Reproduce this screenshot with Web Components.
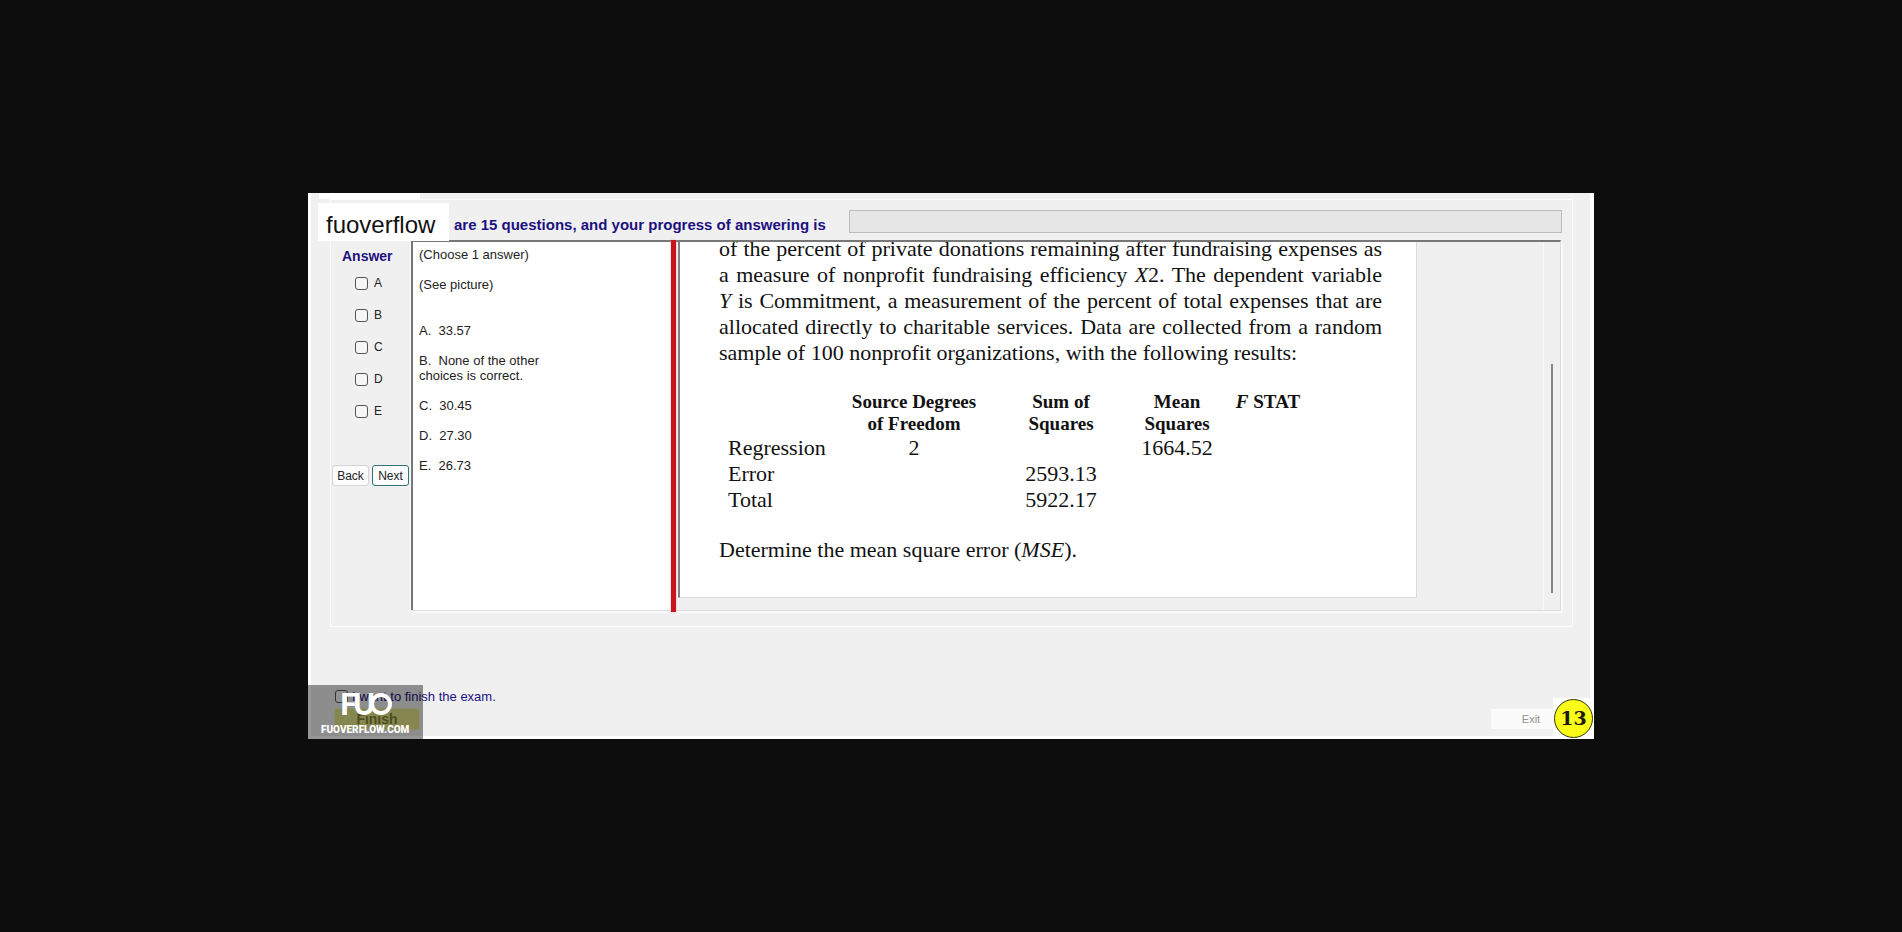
<!DOCTYPE html>
<html lang="en">
<head>
<meta charset="utf-8">
<title>Exam</title>
<style>
  body { margin: 0; background: #0d0d0d; font-family: "Liberation Sans", Arial, sans-serif; }
</style>
</head>
<body>
<exam-app></exam-app>

<template id="exam-app">
  <style>
    :host { display: flex; align-items: center; justify-content: center; min-height: 100vh; }
    main { position: relative; box-sizing: border-box; width: 100%; max-width: 1286px;
      background: linear-gradient(#fff, #fff) 8px 0 / 101px 6px no-repeat #f0f0f0;
      border: solid #fff; border-width: 0 4px 3px 3px; padding-top: 6px; }
    .frame { margin: 0 17px 0 19px; border: 1px solid #fcfcfc; padding: 0 11px 15px 0; }
    .body { display: flex; }
    .panes { flex: 1; min-width: 0; display: flex; border-top: 2px solid #777; border-right: 1px solid #dcdcdc;
      border-bottom: 1px solid #dcdcdc; box-shadow: 2px 2px 0 #fafafa; }
    .bar { width: 5px; background: #c4161c; margin: -2px 0; box-shadow: 0 0 2px #e9a0a0; }
    .view { flex: 1; min-width: 0; display: flex; justify-content: space-between; }
    .rail { width: 16px; border-left: 1px solid #f8f8f8; display: flex; justify-content: center; }
    .thumb { width: 2px; margin: 122px 0 17px; background: #868686; }
    .tag { position: absolute; left: 7px; top: 10px; width: 131px; height: 38px; box-sizing: border-box;
      background: #fff; padding: 5px 0 0 8px; font-size: 24px; line-height: 33px; color: #111; }
  </style>
  <main>
    <div class="frame">
      <exam-progress>are 15 questions, and your progress of answering is</exam-progress>
      <div class="body">
        <answer-panel></answer-panel>
        <div class="panes">
          <question-text></question-text>
          <div class="bar"></div>
          <div class="view">
            <question-picture></question-picture>
            <div class="rail"><div class="thumb"></div></div>
          </div>
        </div>
      </div>
    </div>
    <exam-footer></exam-footer>
    <div class="tag">fuoverflow</div>
  </main>
</template>

<template id="exam-progress">
  <style>
    :host { display: flex; align-items: center; height: 40px; padding-left: 123px; gap: 23px; }
    label { font-weight: bold; font-size: 15px; line-height: 18px; color: #1c1080; padding-top: 9px; white-space: nowrap; }
    .track { flex: 1; height: 21px; border: 1px solid #bcbcbc; background: #e6e6e6; margin-right: -1px; margin-top: 2px; }
  </style>
  <label id="l"><slot></slot></label>
  <div class="track" role="progressbar" aria-labelledby="l"></div>
</template>

<template id="answer-panel">
  <style>
    :host { display: block; width: 80px; flex: none; box-sizing: border-box; border-right: 1px solid #fafafa; }
    h2 { margin: 8px 0 11px 11px; font-size: 14px; line-height: 16px; color: #1c1080; }
    label { display: flex; align-items: center; gap: 6px; height: 16px; margin: 0 0 16px 24px; font-size: 12px; color: #222; }
    input { appearance: none; box-sizing: border-box; width: 13px; height: 13px; margin: 0; border: 1px solid #555; border-radius: 3px; background: #f6f6f6; }
    .nav { display: flex; gap: 3px; margin: 46px 0 0 1px; }
    button { box-sizing: border-box; width: 37px; height: 21px; padding: 0; font: 12px "Liberation Sans", Arial, sans-serif;
      color: #222; background: #fcfcfc; border: 1px solid #d4d4d4; border-radius: 3px; }
    button.on { border-color: #2f7478; }
  </style>
  <h2>Answer</h2>
  <label><input type="checkbox">A</label>
  <label><input type="checkbox">B</label>
  <label><input type="checkbox">C</label>
  <label><input type="checkbox">D</label>
  <label><input type="checkbox">E</label>
  <div class="nav"><button>Back</button><button class="on">Next</button></div>
</template>

<template id="question-text">
  <style>
    :host { display: block; width: 260px; flex: none; box-sizing: border-box; background: #fff; border-left: 2px solid #777;
      padding: 5px 120px 0 6px; font-size: 13px; line-height: 15px; color: #222; }
    p { margin: 0 0 15px; white-space: pre-wrap; }
    .gap { margin-bottom: 31px; }
  </style>
  <p>(Choose 1 answer)</p>
  <p class="gap">(See picture)</p>
  <p>A.  33.57</p>
  <p>B.  None of the other choices is correct.</p>
  <p>C.  30.45</p>
  <p>D.  27.30</p>
  <p>E.  26.73</p>
</template>

<template id="question-picture">
  <style>
    :host { display: block; box-sizing: border-box; max-width: 739px; margin-bottom: 12px; padding: 0 34px 34px 39px; overflow: hidden;
      background: #fff; border: solid #dcdcdc; border-width: 0 1px 1px 0; border-left: 2px solid #808080; margin-left: 2px;
      font: 22px/26px "Liberation Serif", "Times New Roman", serif; color: #111; }
    p { margin: 0; }
    .lead { margin-top: -6px; text-align: justify; }
    table { border-collapse: collapse; table-layout: fixed; width: 597px; margin: 25px 0 24px; }
    th, td { padding: 0; text-align: center; vertical-align: top; }
    thead th { font-size: 19px; line-height: 22px; }
    tbody th { font-weight: normal; text-align: left; padding-left: 9px; }
  </style>
  <p class="lead">of the percent of private donations remaining after fundraising expenses as a measure of nonprofit fundraising efficiency <i>X</i>2. The dependent variable <i>Y</i> is Commitment, a measurement of the percent of total expenses that are allocated directly to charitable services. Data are collected from a random sample of 100 nonprofit organizations, with the following results:</p>
  <table>
    <colgroup><col style="width:121px"><col style="width:148px"><col style="width:146px"><col style="width:86px"><col style="width:96px"></colgroup>
    <thead><tr><td></td><th>Source Degrees<br>of Freedom</th><th>Sum of<br>Squares</th><th>Mean<br>Squares</th><th><i>F</i> STAT</th></tr></thead>
    <tbody>
      <tr><th>Regression</th><td>2</td><td></td><td>1664.52</td><td></td></tr>
      <tr><th>Error</th><td></td><td>2593.13</td><td></td><td></td></tr>
      <tr><th>Total</th><td></td><td>5922.17</td><td></td><td></td></tr>
    </tbody>
  </table>
  <p>Determine the mean square error (<i>MSE</i>).</p>
</template>

<template id="exam-footer">
  <style>
    :host { display: flex; justify-content: space-between; align-items: flex-end; height: 109px; padding: 0 37px 7px 24px; box-sizing: border-box; }
    label { display: flex; align-items: center; gap: 4px; font-size: 13px; line-height: 16px; color: #1c1080; }
    input { appearance: none; box-sizing: border-box; width: 13px; height: 13px; margin: 0 0 2px; border: 1px solid #555; border-radius: 3px; background: #f6f6f6; }
    button { display: block; box-sizing: border-box; border: 0; padding: 0; font: 11px "Liberation Sans", Arial, sans-serif; }
    .finish { width: 84px; height: 20px; margin-top: 4px; font-weight: bold; font-size: 14px; background: #e4e488; color: #84843a; box-shadow: 0 0 3px #e4e488; }
    .exit { width: 62px; height: 20px; background: #fbfbfb; color: #909090; padding-left: 18px; }
    .mark { position: absolute; left: -3px; bottom: -3px; width: 115px; height: 54px; background: rgba(0,0,0,.41); color: #fff; }
    .mark svg { display: block; }
    .count { position: absolute; right: -4px; bottom: -3px; width: 41px; height: 41px; box-sizing: border-box; background: #fff; padding: 1px; }
    .count b { display: block; box-sizing: border-box; width: 39px; height: 39px; border: 1px solid #33330a; border-radius: 50%;
      background: #fbfb1a; text-align: center; font: bold 19px/37px "DejaVu Serif", serif; color: #1a1a05; }
  </style>
  <div>
    <label><input type="checkbox">I want to finish the exam.</label>
    <button class="finish">Finish</button>
  </div>
  <button class="exit" disabled>Exit</button>
  <div class="mark">
    <svg width="115" height="54" fill="#fff" font-weight="900">
      <g font-family="Lato, sans-serif" font-size="30"><text x="32" y="30">F</text><text x="45" y="30">U</text></g>
      <circle cx="73" cy="19" r="9" fill="none" stroke="#fff" stroke-width="4"/>
      <text x="13" y="48" font-family="Roboto, sans-serif" font-size="10">FUOVERFLOW.COM</text>
    </svg>
  </div>
  <div class="count"><b>13</b></div>
</template>

<script>
  for (const name of ["exam-progress", "answer-panel", "question-text", "question-picture", "exam-footer", "exam-app"]) {
    customElements.define(name, class extends HTMLElement {
      constructor() {
        super();
        this.attachShadow({ mode: "open" }).append(document.getElementById(name).content.cloneNode(true));
      }
    });
  }
</script>
</body>
</html>
